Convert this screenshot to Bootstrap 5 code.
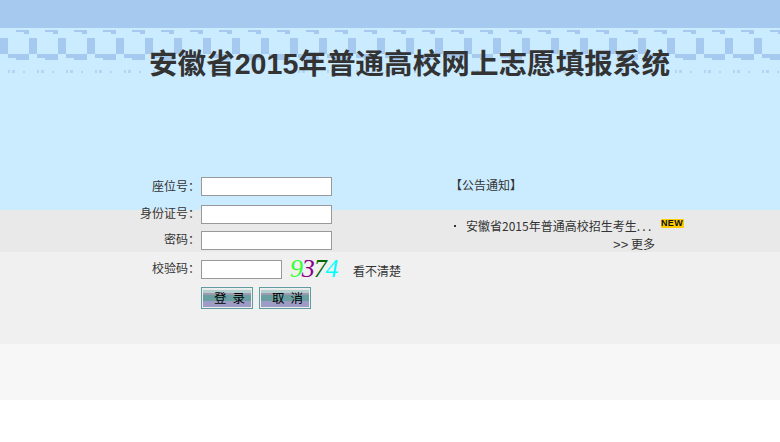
<!doctype html>
<html lang="zh"><head><meta charset="utf-8"><title>志愿填报</title>
<link href="https://cdn.jsdelivr.net/npm/bootstrap@5.3.0/dist/css/bootstrap.min.css" rel="stylesheet">
<style>
html,body{height:100%}
body{font:12px/16px "Noto Sans CJK SC",sans-serif;color:#333;background:#fff;overflow:hidden}
.stage{position:relative;height:442px}
.bands{position:absolute;inset:0;z-index:0}
.b1{height:28px;background:#a6c9ef}.b2{height:182px;background:#cbecff}.b3{height:42px;background:#e9e9e9}.b4{height:92px;background:#f0f0f0}.b5{height:56px;background:#f7f7f7}
.decor{position:absolute;left:0;top:0;width:100%;height:80px}
.front{position:relative;z-index:1}
.ttl{height:177px;padding:46px 0 0 39px;text-align:center;font:bold 28.6px/36px "Liberation Sans","Noto Sans CJK SC",sans-serif;color:#333;margin:0}
.lft{width:332px;flex:none}
.lbl{width:200px;flex:none;text-align:right;margin:0}
.inp{width:131px;height:19px;flex:none;margin-left:1px;border:1px solid #999;background:#fff;padding:0 2px;display:block}
.inp.sm{width:81px}
.rw1{height:28px}.rw2{height:26px}.rw3{height:29px}.rw4{height:27px}
.lbl-a{padding-top:1px}
.cap{flex:none;font:italic 26px/24px "Liberation Serif",serif;margin:-3px 0 0 8px;width:63px;letter-spacing:-1.2px}
.d1{color:#3f3}.d2{color:#808}.d3{color:#060}.d4{color:#0ff}
.hint{margin-top:3px}
.btnbox{gap:6px;margin-left:1px}
.sbtn{width:52px;height:22px;padding:0 0 0 5px;border:1px solid #5f9ea0;box-shadow:inset 0 0 0 1px #eee;color:#000;font-size:12.5px;line-height:18px;word-spacing:3px;background:linear-gradient(#e8e8e8 0 2px,#b4cfcf 2px 5px,#a09ab0 5px 7px,#6a9fa2 7px 13px,#9c9cc4 13px 20px,#eee 20px);border-radius:0}
.rgt{margin-left:119px;width:250px}
.nt1{height:41px;margin-left:-1px}
.bul{width:2px;height:2px;background:#333;margin:7px 10px 0 3px;flex:none}
.dots{letter-spacing:2.3px}
.newb{width:23px;height:9px;flex:none;text-align:center;font:bold 9px/9px "Liberation Sans",sans-serif;letter-spacing:.4px;background:#fc0;color:#111;border-radius:1px;margin:1px 0 0 7px}
.more{text-align:right;padding-right:46px;margin-top:2px}
.chev{font:13px/16px "Liberation Sans",sans-serif}
</style></head><body>
<div class="stage">
<div class="bands"><div class="b1"></div><div class="b2"></div><div class="b3"></div><div class="b4"></div><div class="b5"></div>
<svg class="decor" aria-hidden="true"><defs><pattern id="tile" width="29" height="80" patternUnits="userSpaceOnUse"><path fill="#a6c9ef" d="M16 30h21v2H16zM24 32h5v2h-5zM0 38h8v16H0zM29 38h8v16h-8zM8 54h21v4H8zM16 58h13v2H16z"/><path fill="#a6c9ef" opacity=".65" d="M8 70h2v3H8zM12 70h3v3h-3zM23 71h2v2h-2z"/></pattern></defs><rect width="100%" height="80" fill="url(#tile)"/></svg>
</div>
<div class="front">
<h1 class="ttl">安徽省2015年普通高校网上志愿填报系统</h1>
<div class="d-flex">
<div class="lft">
<div class="d-flex rw1"><label class="lbl lbl-a">座位号：</label><input class="inp" aria-label="座位号"></div>
<div class="d-flex rw2"><label class="lbl">身份证号：</label><input class="inp" aria-label="身份证号"></div>
<div class="d-flex rw3"><label class="lbl">密码：</label><input class="inp" type="password" aria-label="密码"></div>
<div class="d-flex rw4 text-nowrap"><label class="lbl">校验码：</label><input class="inp sm" aria-label="校验码"><span class="cap"><span class="d1">9</span><span class="d2">3</span><span class="d3">7</span><span class="d4">4</span></span><span class="hint">看不清楚</span></div>
<div class="d-flex"><span class="lbl"></span><div class="d-flex btnbox"><button class="btn sbtn">登 录</button><button class="btn sbtn">取 消</button></div></div>
</div>
<div class="rgt">
<div class="nt1">【公告通知】</div>
<div class="d-flex text-nowrap"><span class="bul"></span><span>安徽省2015年普通高校招生考生<span class="dots">...</span></span><span class="newb">NEW</span></div>
<div class="more"><span class="chev">&gt;&gt;</span> 更多</div>
</div>
</div>
</div>
</div>
</body></html>
